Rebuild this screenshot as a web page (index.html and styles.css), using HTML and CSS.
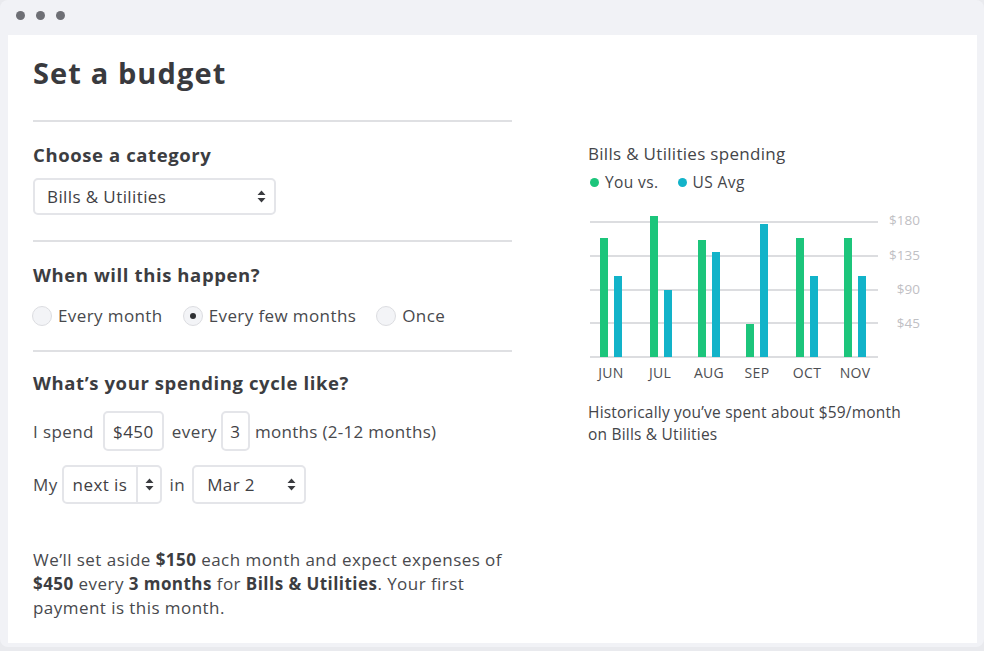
FILE: index.html
```html
<!DOCTYPE html>
<html>
<head>
<meta charset="utf-8">
<link rel="stylesheet" href="styles.css">
</head>
<body>
<div class="window">
  <div class="titlebar">
    <span class="dot"></span><span class="dot"></span><span class="dot"></span>
  </div>
  <div class="content">
    <div class="left">
      <h1 class="title">Set a budget</h1>
      <div class="section sec-cat">
        <h2 class="label">Choose a category</h2>
        <div class="select select-cat">
          <span class="select-text">Bills &amp; Utilities</span>
          <svg class="arrows" width="9" height="13" viewBox="0 0 9 13"><path d="M4.5 0.5 L8.5 5 L0.5 5 Z M4.5 12.5 L8.5 8 L0.5 8 Z" fill="#3a3b3f"/></svg>
        </div>
      </div>
      <div class="section sec-when">
        <h2 class="label">When will this happen?</h2>
        <div class="radios">
          <span class="radio-item"><span class="radio"></span>Every month</span>
          <span class="radio-item"><span class="radio checked"></span>Every few months</span>
          <span class="radio-item"><span class="radio"></span>Once</span>
        </div>
      </div>
      <div class="section sec-cycle">
        <h2 class="label">What’s your spending cycle like?</h2>
        <div class="row row1">
          <span class="t-spend">I spend</span>
          <span class="box box-amt">$450</span>
          <span class="t-every">every</span>
          <span class="box box-num">3</span>
          <span class="t-months">months (2-12 months)</span>
        </div>
        <div class="row row2">
          <span class="t-my">My</span>
          <span class="select select-next"><span class="select-text">next is</span><span class="sep"></span><svg class="arrows" width="9" height="13" viewBox="0 0 9 13"><path d="M4.5 0.5 L8.5 5 L0.5 5 Z M4.5 12.5 L8.5 8 L0.5 8 Z" fill="#3a3b3f"/></svg></span>
          <span class="t-in">in</span>
          <span class="select select-date"><span class="select-text">Mar 2</span><svg class="arrows" width="9" height="13" viewBox="0 0 9 13"><path d="M4.5 0.5 L8.5 5 L0.5 5 Z M4.5 12.5 L8.5 8 L0.5 8 Z" fill="#3a3b3f"/></svg></span>
        </div>
        <p class="summary">We’ll set aside <b>$150</b> each month and expect expenses of <b>$450</b> every <b>3 months</b> for <b>Bills &amp; Utilities</b>. Your first payment is this month.</p>
      </div>
    </div>
    <div class="right">
      <div class="chart-title">Bills &amp; Utilities spending</div>
      <div class="legend">
        <span class="legend-item"><span class="ldot green"></span>You vs.</span>
        <span class="legend-item"><span class="ldot blue"></span>US Avg</span>
      </div>
      <svg class="chart" width="340" height="182" viewBox="0 0 340 182">
        <g stroke="#dcdde0" stroke-width="2">
          <line x1="4" y1="17" x2="292" y2="17"/>
          <line x1="4" y1="51" x2="292" y2="51"/>
          <line x1="4" y1="85" x2="292" y2="85"/>
          <line x1="4" y1="118" x2="292" y2="118"/>
          <line x1="4" y1="152" x2="292" y2="152"/>
        </g>
        <g class="ylab" text-anchor="end">
          <text x="334" y="20">$180</text>
          <text x="334" y="55">$135</text>
          <text x="334" y="89">$90</text>
          <text x="334" y="123">$45</text>
        </g>
        <g fill="#1cc57b">
          <rect x="14" y="33" width="8" height="119"/>
          <rect x="64" y="11" width="8" height="141"/>
          <rect x="112" y="35" width="8" height="117"/>
          <rect x="160" y="119" width="8" height="33"/>
          <rect x="210" y="33" width="8" height="119"/>
          <rect x="258" y="33" width="8" height="119"/>
        </g>
        <g fill="#12b3c9">
          <rect x="28" y="71" width="8" height="81"/>
          <rect x="78" y="85" width="8" height="67"/>
          <rect x="126" y="47" width="8" height="105"/>
          <rect x="174" y="19" width="8" height="133"/>
          <rect x="224" y="71" width="8" height="81"/>
          <rect x="272" y="71" width="8" height="81"/>
        </g>
        <g class="xlab" text-anchor="middle">
          <text x="25" y="173">JUN</text>
          <text x="74" y="173">JUL</text>
          <text x="123" y="173">AUG</text>
          <text x="171" y="173">SEP</text>
          <text x="221" y="173">OCT</text>
          <text x="269" y="173">NOV</text>
        </g>
      </svg>
      <p class="history">Historically you’ve spent about $59/month<br>on Bills &amp; Utilities</p>
    </div>
  </div>
</div>
</body>
</html>
```

FILE: styles.css
```css
* { box-sizing: border-box; }
html, body { margin: 0; padding: 0; }
body {
  width: 984px;
  height: 651px;
  background: #e9eaee;
  font-family: "Open Sans", Lato, sans-serif;
  color: #4a4b50;
  overflow: hidden;
}
.window {
  width: 984px;
  height: 647px;
  background: #f1f2f6;
  border-radius: 8px;
  display: flex;
  flex-direction: column;
  padding: 0 7px 4px 8px;
}
.titlebar {
  height: 35px;
  display: flex;
  align-items: center;
  gap: 11px;
  padding-left: 8px;
  padding-bottom: 5px;
}
.dot {
  width: 9px;
  height: 9px;
  border-radius: 50%;
  background: #6e6f75;
}
.content {
  flex: 1;
  background: #fff;
  display: flex;
  gap: 76px;
  padding: 21px 0 0 25px;
}
.left { width: 479px; flex-shrink: 0; }
.title {
  margin: 0;
  font-size: 29px;
  line-height: 34px;
  font-weight: 700;
  color: #393a3e;
  padding-bottom: 30px;
  border-bottom: 2px solid #dfe0e3;
  letter-spacing: 1.1px;
}
.section { border-bottom: 2px solid #dfe0e3; }
.sec-cycle { border-bottom: none; }
.label {
  margin: 0;
  font-size: 18.5px;
  line-height: 24px;
  font-weight: 700;
  color: #3c3d41;
  letter-spacing: 0.6px;
}
.sec-cat { padding: 21px 0 25px; }
.sec-cat .label { margin-bottom: 11px; }
.select {
  display: flex;
  align-items: center;
  border: 2px solid #e4e5e9;
  border-radius: 5px;
  font-size: 17px;
  letter-spacing: 0.4px;
  color: #3f4044;
  background: #fff;
}
.select-cat {
  width: 243px;
  height: 37px;
  padding: 0 8px 0 12px;
  justify-content: space-between;
}
.sec-when { padding: 21px 0 22px; }
.radios {
  margin-top: 17px;
  display: flex;
  align-items: center;
  font-size: 17px;
  letter-spacing: 0.4px;
  line-height: 24px;
  color: #48494d;
}
.radio-item {
  display: flex;
  align-items: center;
  gap: 6px;
  margin-right: 20px;
}
.radio-item:first-child { margin-left: -1px; }
.radio {
  width: 20px;
  height: 20px;
  border-radius: 50%;
  border: 1px solid #dcdde1;
  background: #f3f4f7;
  display: flex;
  align-items: center;
  justify-content: center;
}
.radio.checked::after {
  content: "";
  width: 6px;
  height: 6px;
  border-radius: 50%;
  background: #2f3034;
}
.sec-cycle { padding: 19px 0 0; }
.row {
  display: flex;
  align-items: center;
  font-size: 17px;
  letter-spacing: 0.4px;
  color: #48494d;
}
.row1 { margin-top: 16px; height: 40px; }
.row2 { margin-top: 14px; height: 39px; }
.t-spend { margin-right: 9px; }
.t-every { margin: 0 4px 0 8px; }
.t-months { margin-left: 5px; letter-spacing: 0.3px; }
.t-my { margin-right: 4px; }
.t-in { margin: 0 7px 0 8px; }
.box {
  display: flex;
  align-items: center;
  justify-content: center;
  height: 40px;
  border: 2px solid #e4e5e9;
  border-radius: 5px;
  color: #3f4044;
}
.box-amt { width: 61px; }
.box-num { width: 29px; }
.select-next {
  width: 100px;
  height: 39px;
  padding-left: 9px;
}
.select-next .sep {
  width: 2px;
  align-self: stretch;
  background: #e4e5e9;
  margin-left: auto;
  margin-right: 7px;
}
.select-next .arrows { margin-right: 6px; }
.select-date {
  width: 114px;
  height: 39px;
  padding: 0 8px 0 13px;
  justify-content: space-between;
}
.summary {
  margin: 44px 0 0;
  width: 490px;
  font-size: 17px;
  letter-spacing: 0.45px;
  line-height: 24px;
  color: #48494d;
}
.summary b { color: #3c3d41; font-weight: 700; }
.chart-title {
  margin-top: 87px;
  font-size: 17px;
  letter-spacing: 0.3px;
  line-height: 22px;
  color: #444549;
}
.legend {
  margin-top: 6px;
  display: flex;
  gap: 19px;
  font-size: 15.5px;
  letter-spacing: 0.4px;
  line-height: 22px;
  color: #444549;
}
.legend-item { display: flex; align-items: center; gap: 6px; }
.legend-item:first-child { margin-left: 2px; }
.ldot { width: 9px; height: 9px; border-radius: 50%; }
.ldot.green { background: #1cc57b; }
.ldot.blue { background: #12b3c9; }
.chart { display: block; margin-top: 12px; margin-left: -2px; }
.ylab text { font-family: "Open Sans", sans-serif; font-size: 13.5px; fill: #bfc0c4; }
.xlab text { font-family: "Open Sans", sans-serif; font-size: 14px; letter-spacing: 0.3px; fill: #4d4e52; }
.history {
  margin: 14px 0 0;
  font-size: 15.5px;
  letter-spacing: 0.2px;
  line-height: 22px;
  color: #444549;
}
```
